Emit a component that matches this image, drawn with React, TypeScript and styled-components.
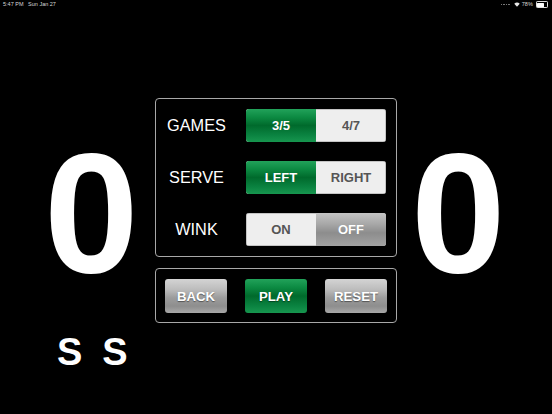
import styled, { createGlobalStyle, css } from 'styled-components';

const GlobalStyle = createGlobalStyle`
    html, body {
        margin: 0;
        padding: 0;
        background: #000;
    }
    body {
        font-family: 'Liberation Sans', Arial, sans-serif;
    }
`;

const Screen = styled.div`
    width: 552px;
    height: 414px;
    background: #000;
    overflow: hidden;
    display: flex;
    flex-direction: column;
`;

const StatusBar = styled.div`
    height: 12px;
    display: flex;
    align-items: flex-start;
    justify-content: space-between;
    padding: 1px 4px 0 3px;
    box-sizing: border-box;
    color: #d8d8d8;
    font-size: 5.5px;
    line-height: 7px;
`;

const StatusRight = styled.div`
    display: flex;
    align-items: center;
    gap: 2px;
    height: 7px;
`;

const Signal = styled.span`
    display: flex;
    gap: 1px;
    margin-right: 2px;
    span {
        width: 1.5px;
        height: 1px;
        background: #777;
        align-self: flex-end;
    }
`;

const Battery = styled.span`
    width: 9px;
    height: 4px;
    border: 0.6px solid #ddd;
    border-radius: 1.2px;
    padding: 0.6px;
    margin-left: 1px;
    &::before {
        content: '';
        display: block;
        width: 78%;
        height: 100%;
        background: #fff;
        border-radius: 0.5px;
    }
`;

const Main = styled.div`
    flex: 1;
    display: grid;
    grid-template-columns: 155px 242px 155px;
`;

const ScoreColumn = styled.div<{ $side: 'left' | 'right' }>`
    display: flex;
    flex-direction: column;
    padding-top: 116px;
    padding-left: ${(p) => (p.$side === 'left' ? '44px' : '14px')};
`;

const Digit = styled.div`
    font-weight: 700;
    font-size: 170px;
    line-height: 170px;
    height: 170px;
    color: #fff;
`;

const ServeMarks = styled.div`
    display: flex;
    gap: 20px;
    margin-top: 35px;
    padding-left: 13px;
    font-weight: 700;
    font-size: 38px;
    line-height: 38px;
    color: #fff;
`;

const Center = styled.div`
    display: flex;
    flex-direction: column;
    padding-top: 86px;
    gap: 11px;
`;

const Panel = styled.div`
    border: 1px solid #a8a8a8;
    border-radius: 4px;
`;

const SettingsPanel = styled(Panel)`
    display: flex;
    flex-direction: column;
    gap: 19px;
    padding: 10px 10px 10px 11px;
`;

const SettingRow = styled.div`
    display: grid;
    grid-template-columns: 59px 140px;
    column-gap: 20px;
    align-items: center;
`;

const Label = styled.div`
    color: #fff;
    font-size: 16.3px;
    text-align: center;
    white-space: nowrap;
`;

const Segmented = styled.div`
    display: grid;
    grid-template-columns: 1fr 1fr;
    height: 33px;
    border-radius: 3px;
    overflow: hidden;
    background: #eeeeee;
    box-shadow: inset 0 0 0 0.5px #9a9a9a;
`;

const greenFill = 'linear-gradient(#22a25a 0%, #0c8a42 25%, #006a2c 50%, #0a8240 78%, #17964f 100%)';

const green = css`
    background: ${greenFill};
    color: #fff;
    text-shadow: 0 -0.5px 0 rgba(0, 0, 0, 0.35);
`;

const gray = css`
    background: linear-gradient(#c4c4c4 0%, #a6a6a6 35%, #8d8d8d 60%, #a2a2a2 100%);
    color: #fff;
    text-shadow: 0 -0.5px 0 rgba(0, 0, 0, 0.3);
`;

const Segment = styled.div<{ $active?: 'green' | 'gray' }>`
    display: flex;
    align-items: center;
    justify-content: center;
    font-weight: 700;
    font-size: 13px;
    color: #555;
    ${(p) => p.$active === 'green' && green}
    ${(p) => p.$active === 'gray' && gray}
`;

const ControlsPanel = styled(Panel)`
    display: flex;
    gap: 18px;
    padding: 10px 9px 9px 9px;
`;

const ActionButton = styled.div<{ $primary?: boolean }>`
    width: 62px;
    height: 34px;
    border-radius: 3px;
    display: flex;
    align-items: center;
    justify-content: center;
    font-weight: 700;
    font-size: 13.2px;
    color: #fff;
    text-shadow: 0 0.5px 1px rgba(0, 0, 0, 0.45);
    background: ${(p) =>
        p.$primary
            ? greenFill
            : 'linear-gradient(#d4d4d4 0%, #bdbdbd 30%, #9c9c9c 55%, #8e8e8e 80%, #a8a8a8 100%)'};
`;

const settings = [
    { label: 'GAMES', options: ['3/5', '4/7'], selected: 0, tone: 'green' as const },
    { label: 'SERVE', options: ['LEFT', 'RIGHT'], selected: 0, tone: 'green' as const },
    { label: 'WINK', options: ['ON', 'OFF'], selected: 1, tone: 'gray' as const },
];

const WifiIcon = () => (
    <svg width="6" height="5" viewBox="0 0 12 10">
        <path d="M6 9.5 L0.5 3.5 A8 8 0 0 1 11.5 3.5 Z" fill="#e8e8e8" />
    </svg>
);

export default function App() {
    return (
        <>
            <GlobalStyle />
            <Screen>
                <StatusBar>
                    <span>5:47 PM&nbsp;&nbsp;&nbsp;Sun Jan 27</span>
                    <StatusRight>
                        <Signal>
                            <span />
                            <span />
                            <span />
                            <span />
                        </Signal>
                        <WifiIcon />
                        <span>78%</span>
                        <Battery />
                    </StatusRight>
                </StatusBar>
                <Main>
                    <ScoreColumn $side="left">
                        <Digit>0</Digit>
                        <ServeMarks>
                            <span>S</span>
                            <span>S</span>
                        </ServeMarks>
                    </ScoreColumn>
                    <Center>
                        <SettingsPanel>
                            {settings.map((s) => (
                                <SettingRow key={s.label}>
                                    <Label>{s.label}</Label>
                                    <Segmented>
                                        {s.options.map((o, i) => (
                                            <Segment key={o} $active={i === s.selected ? s.tone : undefined}>
                                                {o}
                                            </Segment>
                                        ))}
                                    </Segmented>
                                </SettingRow>
                            ))}
                        </SettingsPanel>
                        <ControlsPanel>
                            <ActionButton>BACK</ActionButton>
                            <ActionButton $primary>PLAY</ActionButton>
                            <ActionButton>RESET</ActionButton>
                        </ControlsPanel>
                    </Center>
                    <ScoreColumn $side="right">
                        <Digit>0</Digit>
                    </ScoreColumn>
                </Main>
            </Screen>
        </>
    );
}
